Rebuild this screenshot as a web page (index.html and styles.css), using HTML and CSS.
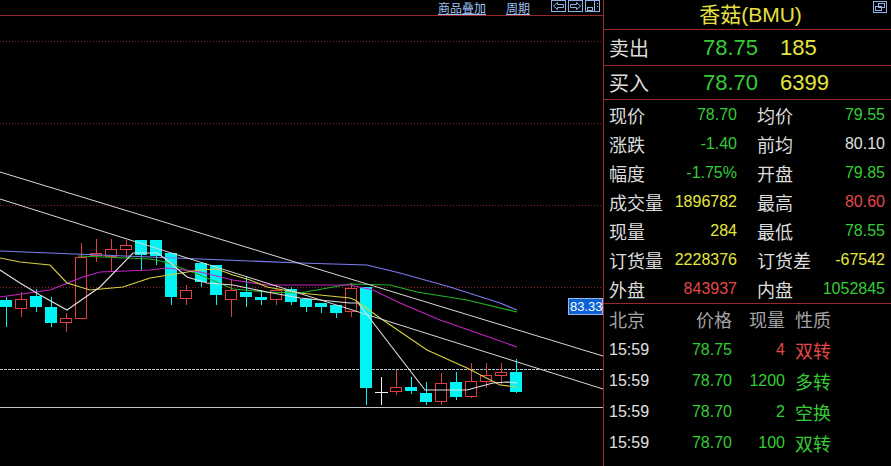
FILE: index.html
```html
<!DOCTYPE html>
<html lang="zh">
<head>
<meta charset="utf-8">
<title>香菇(BMU)</title>
<link rel="stylesheet" href="styles.css">
</head>
<body>
<div class="app">
  <section class="chart">
    <div class="toolbar">
      <a class="tlink tlink-a">商品叠加</a>
      <a class="tlink tlink-b">周期</a>
      <div class="tbtns">
        <svg class="tbtn" width="15" height="12" viewBox="0 0 15 12"><rect x="0.5" y="0.5" width="14" height="11" class="tb-box"/><polygon points="2.5,6 6.5,2.5 6.5,4.5 12.5,4.5 12.5,7.5 6.5,7.5 6.5,9.5" class="tb-line"/></svg>
        <svg class="tbtn" width="15" height="12" viewBox="0 0 15 12"><rect x="0.5" y="0.5" width="14" height="11" class="tb-box"/><polygon points="12.5,6 8.5,2.5 8.5,4.5 2.5,4.5 2.5,7.5 8.5,7.5 8.5,9.5" class="tb-line"/></svg>
        <svg class="tbtn" width="15" height="12" viewBox="0 0 15 12"><rect x="0.5" y="0.5" width="14" height="11" class="tb-box"/><line x1="9.5" y1="1" x2="9.5" y2="11" class="tb-line"/><rect x="2.5" y="7.5" width="5" height="3" class="tb-line"/><line x1="12" y1="3.5" x2="13" y2="3.5" class="tb-line"/><line x1="12" y1="6.5" x2="13" y2="6.5" class="tb-line"/></svg>
      </div>
    </div>
    <div class="plot">
      <svg class="plot-svg" width="603" height="450" viewBox="0 16 603 450">
        <g class="grid">
          <line x1="0" y1="41.5" x2="603" y2="41.5" class="dot-red"/>
          <line x1="0" y1="123.5" x2="603" y2="123.5" class="dot-red"/>
          <line x1="0" y1="205.5" x2="603" y2="205.5" class="dot-red"/>
          <line x1="0" y1="287.5" x2="603" y2="287.5" class="dot-red"/>
          <line x1="0" y1="369.5" x2="603" y2="369.5" class="dot-light"/>
          <line x1="0" y1="407.5" x2="603" y2="407.5" class="solid-grey"/>
        </g>
        <g class="cdl">
          <line x1="6.5" y1="297" x2="6.5" y2="327" class="w-dn"/><rect x="0" y="300" width="12" height="7" class="dn"/>
          <line x1="21.5" y1="292" x2="21.5" y2="317" class="w-up"/><rect x="15.5" y="299.5" width="11" height="9" class="up"/>
          <line x1="36.5" y1="289" x2="36.5" y2="312" class="w-dn"/><rect x="30" y="296" width="12" height="11" class="dn"/>
          <line x1="51.5" y1="297" x2="51.5" y2="327" class="w-dn"/><rect x="45" y="307" width="12" height="16" class="dn"/>
          <line x1="66.5" y1="313" x2="66.5" y2="332" class="w-up"/><rect x="60.5" y="318.5" width="11" height="4" class="up"/>
          <line x1="81.5" y1="243" x2="81.5" y2="319" class="w-up"/><rect x="75.5" y="257.5" width="11" height="61" class="up"/>
          <line x1="96.5" y1="239" x2="96.5" y2="262" class="w-up"/><rect x="90.5" y="253.5" width="11" height="2" class="up"/>
          <line x1="111.5" y1="239" x2="111.5" y2="272" class="w-up"/><rect x="105.5" y="249.5" width="11" height="7" class="up"/>
          <line x1="126.5" y1="240" x2="126.5" y2="258" class="w-up"/><rect x="120.5" y="245.5" width="11" height="4" class="up"/>
          <line x1="141.5" y1="240" x2="141.5" y2="270" class="w-dn"/><rect x="135" y="240" width="12" height="15" class="dn"/>
          <line x1="156.5" y1="240" x2="156.5" y2="265" class="w-dn"/><rect x="150" y="240" width="12" height="16" class="dn"/>
          <line x1="171.5" y1="253" x2="171.5" y2="305" class="w-dn"/><rect x="165" y="253" width="12" height="44" class="dn"/>
          <line x1="186.5" y1="285" x2="186.5" y2="305" class="w-up"/><rect x="180.5" y="290.5" width="11" height="8" class="up"/>
          <line x1="201.5" y1="263" x2="201.5" y2="287" class="w-dn"/><rect x="195" y="263" width="12" height="19" class="dn"/>
          <line x1="216.5" y1="265" x2="216.5" y2="305" class="w-dn"/><rect x="210" y="265" width="12" height="30" class="dn"/>
          <line x1="231.5" y1="280" x2="231.5" y2="317" class="w-up"/><rect x="225.5" y="290.5" width="11" height="9" class="up"/>
          <line x1="246.5" y1="277" x2="246.5" y2="307" class="w-dn"/><rect x="240" y="292" width="12" height="5" class="dn"/>
          <line x1="261.5" y1="290" x2="261.5" y2="305" class="w-dn"/><rect x="255" y="297" width="12" height="3" class="dn"/>
          <line x1="276.5" y1="285" x2="276.5" y2="305" class="w-up"/><rect x="270.5" y="290.5" width="11" height="9" class="up"/>
          <line x1="291.5" y1="287" x2="291.5" y2="305" class="w-dn"/><rect x="285" y="289" width="12" height="13" class="dn"/>
          <line x1="306.5" y1="299" x2="306.5" y2="312" class="w-dn"/><rect x="300" y="299" width="12" height="8" class="dn"/>
          <line x1="321.5" y1="303" x2="321.5" y2="313" class="w-dn"/><rect x="315" y="303" width="12" height="4" class="dn"/>
          <line x1="336.5" y1="305" x2="336.5" y2="318" class="w-dn"/><rect x="330" y="305" width="12" height="8" class="dn"/>
          <line x1="351.5" y1="283" x2="351.5" y2="317" class="w-up"/><rect x="345.5" y="288.5" width="11" height="23" class="up"/>
          <line x1="366.5" y1="287" x2="366.5" y2="405" class="w-dn"/><rect x="360" y="287" width="12" height="101" class="dn"/>
          <line x1="381.5" y1="377" x2="381.5" y2="405" class="w-dj"/><line x1="375" y1="392.5" x2="388" y2="392.5" class="w-dj"/>
          <line x1="396.5" y1="370" x2="396.5" y2="395" class="w-up"/><rect x="390.5" y="387.5" width="11" height="4" class="up"/>
          <line x1="411.5" y1="377" x2="411.5" y2="394" class="w-dn"/><rect x="405" y="387" width="12" height="4" class="dn"/>
          <line x1="426.5" y1="382" x2="426.5" y2="405" class="w-dn"/><rect x="420" y="393" width="12" height="9" class="dn"/>
          <line x1="441.5" y1="373" x2="441.5" y2="405" class="w-up"/><rect x="435.5" y="383.5" width="11" height="18" class="up"/>
          <line x1="456.5" y1="372" x2="456.5" y2="400" class="w-dn"/><rect x="450" y="382" width="12" height="15" class="dn"/>
          <line x1="471.5" y1="363" x2="471.5" y2="398" class="w-up"/><rect x="465.5" y="381.5" width="11" height="15" class="up"/>
          <line x1="486.5" y1="363" x2="486.5" y2="388" class="w-up"/><rect x="480.5" y="375.5" width="11" height="6" class="up"/>
          <line x1="501.5" y1="363" x2="501.5" y2="385" class="w-up"/><rect x="495.5" y="372.5" width="11" height="3" class="up"/>
          <line x1="516.5" y1="359" x2="516.5" y2="393" class="w-dn"/><rect x="510" y="372" width="12" height="20" class="dn"/>
        </g>
        <g class="mas">
          <polyline class="ma-lav" points="0,251 100,255 200,259 300,263 367,265 400,273 450,287 500,303 517,310"/>
          <polyline class="ma-grn" points="78,256 150,259 165,262 200,275 233,289 267,292 300,293 350,284 390,285 417,292 467,300 517,312"/>
          <polyline class="ma-mag" points="0,297 50,290 83,277 100,272 150,270 167,268 200,272 233,280 267,285 300,285 350,285 373,290 400,303 440,320 483,335 517,347"/>
          <polyline class="ma-yel" points="0,258 20,262 50,265 67,283 90,290 123,287 150,278 200,270 217,269 233,275 250,280 267,287 300,293 350,298 355,300 380,318 427,350 467,368 500,385 517,387"/>
          <polyline class="ma-wht" points="0,270 20,283 40,295 67,310 100,287 133,253 157,253 167,260 187,277 207,283 233,285 267,292 300,298 350,303 358,303 425,390 467,390 493,383 507,382 517,383"/>
          <line class="trend" x1="0" y1="172" x2="603" y2="356"/>
          <line class="trend" x1="0" y1="199" x2="603" y2="389"/>
        </g>
      </svg>
      <div class="price-tag">83.33</div>
    </div>
  </section>
  <aside class="panel">
    <div class="title">香菇(BMU)
      <svg class="restore" width="14" height="12" viewBox="0 0 14 12"><rect x="0.5" y="0.5" width="13" height="11" class="tb-box"/><rect x="5.5" y="2.5" width="6" height="4" class="tb-line"/><rect x="2.5" y="5.5" width="6" height="4" class="tb-line"/></svg>
    </div>
    <div class="quote q-sell"><span class="ql">卖出</span><span class="qp green">78.75</span><span class="qv yellow">185</span></div>
    <div class="quote q-buy"><span class="ql">买入</span><span class="qp green">78.70</span><span class="qv yellow">6399</span></div>
    <div class="stats">
      <div class="cell"><span class="lbl">现价</span><span class="num green">78.70</span></div>
      <div class="cell"><span class="lbl">均价</span><span class="num green">79.55</span></div>
      <div class="cell"><span class="lbl">涨跌</span><span class="num green">-1.40</span></div>
      <div class="cell"><span class="lbl">前均</span><span class="num white">80.10</span></div>
      <div class="cell"><span class="lbl">幅度</span><span class="num green">-1.75%</span></div>
      <div class="cell"><span class="lbl">开盘</span><span class="num green">79.85</span></div>
      <div class="cell"><span class="lbl">成交量</span><span class="num yellow">1896782</span></div>
      <div class="cell"><span class="lbl">最高</span><span class="num red">80.60</span></div>
      <div class="cell"><span class="lbl">现量</span><span class="num yellow">284</span></div>
      <div class="cell"><span class="lbl">最低</span><span class="num green">78.55</span></div>
      <div class="cell"><span class="lbl">订货量</span><span class="num yellow">2228376</span></div>
      <div class="cell"><span class="lbl">订货差</span><span class="num yellow">-67542</span></div>
      <div class="cell"><span class="lbl">外盘</span><span class="num red">843937</span></div>
      <div class="cell"><span class="lbl">内盘</span><span class="num green">1052845</span></div>
    </div>
    <div class="trades">
      <div class="trow thead"><span class="lbl grey">北京</span><span class="lbl grey right">价格</span><span class="lbl grey right">现量</span><span class="lbl grey nature">性质</span></div>
      <div class="trow"><span class="num white">15:59</span><span class="num green right">78.75</span><span class="num red right">4</span><span class="lbl red nature">双转</span></div>
      <div class="trow"><span class="num white">15:59</span><span class="num green right">78.70</span><span class="num green right">1200</span><span class="lbl green nature">多转</span></div>
      <div class="trow"><span class="num white">15:59</span><span class="num green right">78.70</span><span class="num green right">2</span><span class="lbl green nature">空换</span></div>
      <div class="trow"><span class="num white">15:59</span><span class="num green right">78.70</span><span class="num green right">100</span><span class="lbl green nature">双转</span></div>
    </div>
  </aside>
</div>
</body>
</html>
```

FILE: styles.css
```css
* { box-sizing: border-box; margin: 0; padding: 0; }
html, body { background: #000; }
body {
  width: 891px;
  height: 466px;
  overflow: hidden;
  font-family: "Liberation Sans", "Noto Sans CJK SC", sans-serif;
  color: #dcdcdc;
}
.app { display: flex; height: 466px; }

/* chart side */
.chart {
  width: 604px;
  border-right: 1px solid #9a2a2a;
  display: flex;
  flex-direction: column;
}
.toolbar {
  height: 16px;
  border-bottom: 1px solid #9a2a2a;
  display: flex;
  justify-content: flex-end;
  align-items: flex-start;
  padding-right: 3px;
}
.tlink {
  display: block;
  margin-top: 1px;
  font-family: "Noto Sans CJK SC", sans-serif;
  font-size: 12px;
  line-height: 13px;
  color: #9cc0f4;
  text-decoration: underline;
  white-space: nowrap;
}
.tlink-a { margin-right: 20px; }
.tlink-b { margin-right: 21px; }
.tbtns { display: flex; gap: 2px; }
.tbtn { display: block; }
.tb-box { fill: none; stroke: #8fb4e8; stroke-width: 1; }
.tb-line { fill: none; stroke: #8fb4e8; stroke-width: 1; }

.plot { position: relative; flex: 1; }
.plot-svg { display: block; }
.dot-red { stroke: #8e2424; stroke-width: 1; stroke-dasharray: 1 2; }
.dot-light { stroke: #b4c4cc; stroke-width: 1; stroke-dasharray: 3 1; }
.solid-grey { stroke: #c4c4c4; stroke-width: 1; }
.cdl { shape-rendering: crispEdges; }
.up { fill: #000; stroke: #e04040; stroke-width: 1; }
.dn { fill: #00f4f4; }
.w-up { stroke: #e04040; stroke-width: 1; }
.w-dn { stroke: #00f4f4; stroke-width: 1; }
.w-dj { stroke: #f0f0f0; stroke-width: 1; }
.mas polyline { fill: none; stroke-width: 1.1; }
.ma-lav { stroke: #7c7cf0; }
.ma-grn { stroke: #22b422; }
.ma-mag { stroke: #c424c4; }
.ma-yel { stroke: #d8d040; }
.ma-wht { stroke: #e0e0e0; }
.trend { stroke: #d8d8d8; stroke-width: 1; }

.price-tag {
  position: absolute;
  left: 568px;
  top: 282px;
  width: 35px;
  height: 17px;
  background: #0a62d8;
  border: 1px solid #9cb8e0;
  color: #fff;
  font-size: 13px;
  line-height: 15px;
  padding-left: 1px;
  overflow: hidden;
  white-space: nowrap;
}

/* right panel */
.panel { width: 287px; display: flex; flex-direction: column; }
.title {
  position: relative;
  height: 30px;
  border-bottom: 1px solid #9a2a2a;
  text-align: center;
  color: #e6e040;
  font-size: 21px;
  line-height: 29px;
  padding-left: 6px;
}
.restore { position: absolute; right: 4px; top: 1px; }

.quote {
  display: grid;
  grid-template-columns: 60px 67px auto;
  column-gap: 22px;
  align-items: center;
  padding-left: 5px;
  border-bottom: 1px solid #9a2a2a;
}
.q-sell { height: 36px; }
.q-buy { height: 34px; }
.ql { font-family: "Noto Sans CJK SC", sans-serif; font-size: 20px; line-height: 1; color: #dcdcdc; }
.qp { font-size: 22px; line-height: 1; text-align: right; }
.qv { font-size: 22px; line-height: 1; }

.stats {
  height: 204px;
  border-bottom: 1px solid #9a2a2a;
  padding: 0 6px 0 5px;
  display: grid;
  grid-template-columns: 128px 128px;
  column-gap: 20px;
  grid-auto-rows: 29px;
}
.cell { display: flex; justify-content: space-between; align-items: center; }
.lbl { font-family: "Noto Sans CJK SC", sans-serif; font-size: 18px; line-height: 1; color: #dcdcdc; }
.num { font-size: 16px; line-height: 1; }

.trades { padding-left: 5px; }
.trow {
  display: grid;
  grid-template-columns: 60px 63px 53px auto;
  height: 31px;
  align-items: center;
}
.thead { height: 30px; }
.right { text-align: right; }
.nature { padding-left: 10px; }

.green { color: #36cc36; }
.yellow { color: #e6e63c; }
.red { color: #e44848; }
.white { color: #e0e0e0; }
.lbl.grey { color: #a4a4a4; }
.lbl.red { color: #e44848; }
.lbl.green { color: #36cc36; }
```
